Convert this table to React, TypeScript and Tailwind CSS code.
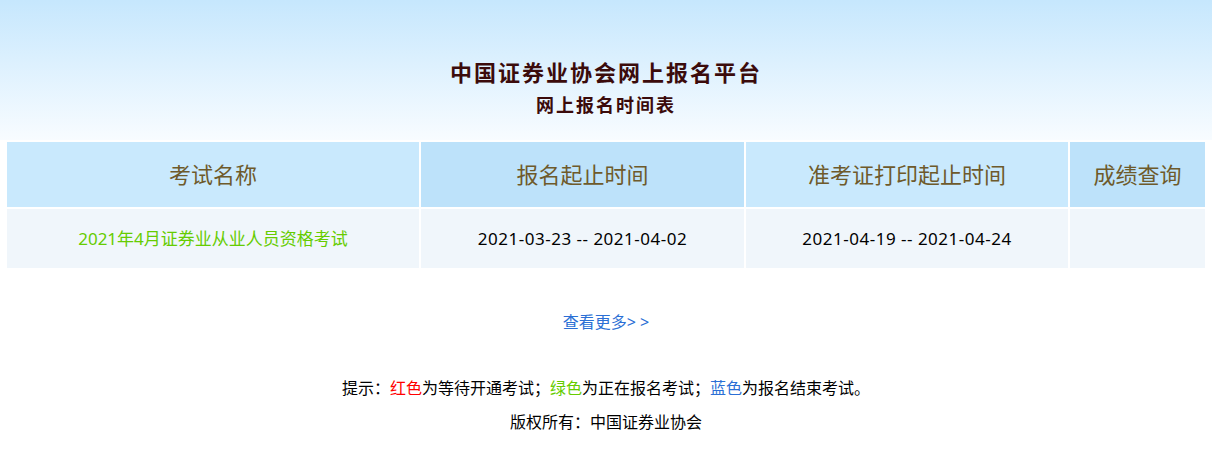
const FONT = '"Noto Sans", "Noto Sans CJK SC", sans-serif';

const columns = [
  { title: '考试名称', width: 'w-[412px]', bg: 'bg-[#c9e9fd]' },
  { title: '报名起止时间', width: 'w-[323px]', bg: 'bg-[#bde2fa]' },
  { title: '准考证打印起止时间', width: 'w-[322px]', bg: 'bg-[#c9e9fd]' },
  { title: '成绩查询', width: 'w-[135px]', bg: 'bg-[#bde2fa]' },
];

const exams = [
  {
    name: '2021年4月证券业从业人员资格考试',
    signup: '2021-03-23 -- 2021-04-02',
    ticket: '2021-04-19 -- 2021-04-24',
  },
];

export default function App() {
  return (
    <div className="w-[1212px] h-[450px] bg-white" style={{ fontFamily: FONT }}>
      <div className="h-[140px] bg-gradient-to-b from-[#c6e7fd] to-[#f8fcff] flex flex-col items-center pt-[56px]">
        <h1 className="text-[22px] leading-[32px] font-bold tracking-[2px] text-[#3b0b0b]">中国证券业协会网上报名平台</h1>
        <h2 className="mt-[4px] text-[18px] leading-[26px] font-bold tracking-[2px] text-[#3b0b0b]">网上报名时间表</h2>
      </div>

      <table className="mx-auto border-separate border-spacing-[2px]">
        <thead>
          <tr>
            {columns.map((c) => (
              <th
                key={c.title}
                className={`${c.width} ${c.bg} h-[65px] p-0 text-center text-[22px] font-normal text-[#6e5a2b]`}
              >
                {c.title}
              </th>
            ))}
          </tr>
        </thead>
        <tbody>
          {exams.map((e) => (
            <tr key={e.name} className="bg-[#f0f6fb] text-[17px] text-black">
              <td className="h-[59px] p-0 text-center text-[#66cc00]">{e.name}</td>
              <td className="p-0 text-center tracking-[0.5px]">{e.signup}</td>
              <td className="p-0 text-center tracking-[0.5px]">{e.ticket}</td>
              <td className="p-0"></td>
            </tr>
          ))}
        </tbody>
      </table>

      <div className="mt-[41px] text-center text-[16px] leading-[22px]">
        <a href="#" className="text-[#2b6fd5]">查看更多&gt; &gt;</a>
      </div>

      <div className="mt-[44px] flex flex-col items-center gap-[12px] text-[16px] leading-[22px] text-black">
        <p>
          提示：<span className="text-[#ff0000]">红色</span>为等待开通考试；
          <span className="text-[#66cc00]">绿色</span>为正在报名考试；
          <span className="text-[#2b6fd5]">蓝色</span>为报名结束考试。
        </p>
        <p>版权所有：中国证券业协会</p>
      </div>
    </div>
  );
}
